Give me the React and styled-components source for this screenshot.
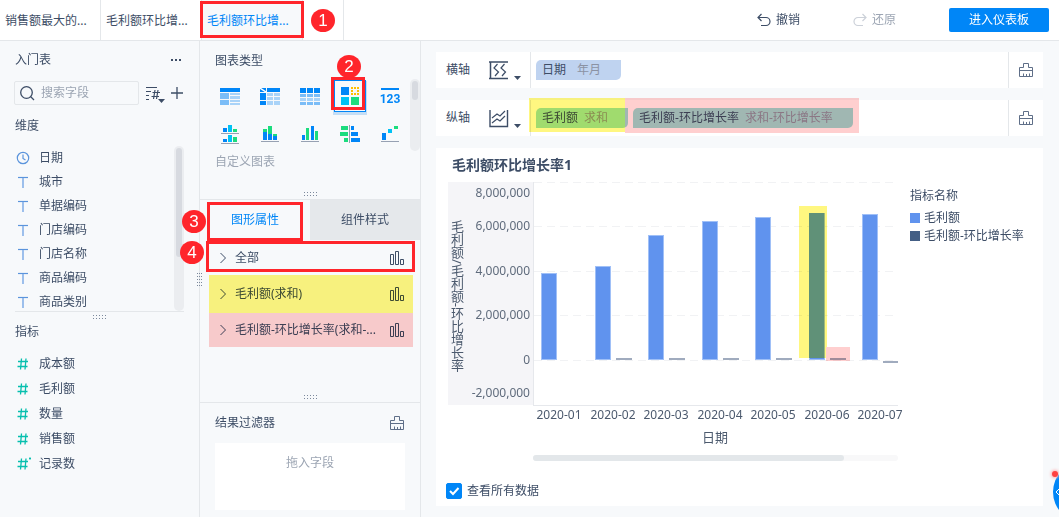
import React from 'react';
import styled, { createGlobalStyle, css } from 'styled-components';

const colors = {
  text: '#3d4d66',
  muted: '#9ca5b3',
  blue: '#0086f7',
  panel: '#f7f9fb',
  line: '#e4e7ea',
  red: '#ff252b',
  yellow: '#fff780',
  pink: '#ffcfcf',
  teal: '#06bfae',
};

const GlobalStyle = createGlobalStyle`
  * {
    box-sizing: border-box;
  }
  body {
    margin: 0;
    background: ${colors.panel};
    color: ${colors.text};
    font: 12px/18px 'Noto Sans', 'Noto Sans CJK SC', sans-serif;
  }
  button, input {
    font: inherit;
    color: inherit;
  }
  button {
    border: 0;
    padding: 0;
    background: none;
    cursor: pointer;
  }
  ul {
    margin: 0;
    padding: 0;
    list-style: none;
  }
  h2, h3 {
    margin: 0;
    font-size: 12px;
    font-weight: 400;
  }
  svg {
    display: block;
    flex: none;
  }
`;

const Page = styled.div`
  position: relative;
  display: flex;
  flex-direction: column;
  min-height: 100vh;
  overflow: hidden;
`;
const Header = styled.header`
  display: flex;
  align-items: stretch;
  height: 41px;
  background: #fff;
  border-bottom: 1px solid ${colors.line};
`;
const SheetTab = styled.div`
  position: relative;
  display: flex;
  width: 101px;
  border-right: 1px solid ${colors.line};
  background: ${({ $active }) => ($active ? colors.panel : '#fff')};
  color: ${({ $active }) => ($active ? colors.blue : colors.text)};

  button {
    flex: 1;
    padding: 1px 5px 0;
    text-align: left;
  }
`;
const TabEnd = styled.div`
  width: 41px;
  border-right: 1px solid ${colors.line};
`;
const HeaderActions = styled.div`
  display: flex;
  align-items: center;
  margin-left: auto;
  padding-right: 10px;
`;
const TextAction = styled.button`
  display: flex;
  align-items: center;
  gap: 5px;
  margin-right: 53px;

  &:disabled {
    color: ${colors.muted};
  }
`;
const PrimaryButton = styled.button`
  width: 100px;
  height: 24px;
  border-radius: 2px;
  background: ${colors.blue};
  color: #fff;
`;
const Body = styled.div`
  display: flex;
  flex: 1;
`;

/* Callouts drawn over the interface */
const Frame = styled.span`
  position: absolute;
  z-index: 2;
  top: ${({ $top }) => $top}px;
  bottom: ${({ $bottom }) => $bottom}px;
  left: ${({ $left }) => $left}px;
  right: ${({ $right }) => $right}px;
  border: 3px solid ${colors.red};
  pointer-events: none;
`;
const Step = styled.span`
  position: absolute;
  z-index: 3;
  top: ${({ $top }) => $top}px;
  left: ${({ $left }) => $left}px;
  width: 24px;
  height: 23px;
  border-radius: 50%;
  background: ${colors.red};
  color: #fff;
  font: 17px/23px 'Liberation Sans', Arial, sans-serif;
  text-align: center;
`;
const Marker = styled.span`
  position: absolute;
  z-index: 1;
  top: ${({ $top }) => $top}px;
  bottom: ${({ $bottom }) => $bottom}px;
  left: ${({ $left }) => $left}px;
  right: ${({ $right }) => $right}px;
  background: ${({ $color }) => $color};
  mix-blend-mode: multiply;
  pointer-events: none;
`;

/* Field list */
const Fields = styled.aside`
  position: relative;
  flex: none;
  width: 200px;
  padding: 0 15px;
  border-right: 1px solid ${colors.line};
`;
const PanelTitle = styled.h2`
  display: flex;
  align-items: center;
  justify-content: space-between;
  height: 38px;
  padding-right: 2px;
`;
const Tools = styled.div`
  display: flex;
  align-items: center;
  gap: 6px;
  margin: 2px 0 0 -1px;
`;
const SearchBox = styled.label`
  display: flex;
  align-items: center;
  gap: 6px;
  width: 125px;
  height: 24px;
  padding: 0 4px;
  border: 1px solid ${colors.line};
  border-radius: 2px;

  input {
    flex: 1;
    min-width: 0;
    padding: 0;
    border: 0;
    outline: 0;
    background: none;
  }
  input::placeholder {
    color: ${colors.muted};
  }
`;
const GroupTitle = styled.h3`
  line-height: ${({ $height }) => $height}px;
`;
const DimensionArea = styled.div`
  display: flex;
  justify-content: space-between;
  height: 166px;
  overflow: hidden;
  border-bottom: 1px solid ${colors.line};
`;
const FieldRow = styled.li`
  display: flex;
  align-items: center;
  gap: 8px;
  height: ${({ $height }) => $height}px;

  svg {
    width: 16px;
  }
`;
const MeasureList = styled.ul`
  margin-top: 9px;
`;
const ScrollTrack = styled.div`
  flex: none;
  width: 10px;
  padding: 2px;
  border-radius: 5px;
  background: #ebedf0;

  &::before {
    content: '';
    display: block;
    height: ${({ $thumb }) => $thumb}px;
    border-radius: 3px;
    background: #d7dae0;
  }
`;
const HandleRow = styled.div`
  display: flex;
  align-items: center;
  justify-content: center;
  height: 10px;
`;
const SideHandle = styled.div`
  position: absolute;
  top: 232px;
  right: -3px;
`;

/* Chart settings */
const Settings = styled.section`
  flex: none;
  width: 221px;
  border-right: 1px solid ${colors.line};
`;
const SettingsBlock = styled.div`
  display: flex;
  flex-direction: column;
  min-height: ${({ $height }) => $height}px;
  border-bottom: 1px solid ${colors.line};

  > ${HandleRow} {
    margin-top: auto;
  }
`;
const BlockTitle = styled(PanelTitle)`
  padding: 2px 15px 0;
`;
const TypePicker = styled.div`
  display: flex;
  justify-content: space-between;
  padding-left: 10px;
`;
const TypeGrid = styled.div`
  display: grid;
  grid-template-columns: repeat(5, 40px);
  grid-auto-rows: 34px;
  row-gap: 4px;
`;
const TypeCell = styled.div`
  position: relative;
  display: flex;
  align-items: center;
  justify-content: center;
`;
const TypeButton = styled.button`
  display: flex;
  align-items: center;
  justify-content: center;
  width: 32px;
  height: 32px;
  ${({ $active }) =>
    $active &&
    css`
      border: 1px solid ${colors.blue};
      box-shadow: 0 2px 0 1px #c5def5;
    `}
`;
const CustomTitle = styled.h3`
  padding-left: 15px;
  color: ${colors.muted};
  line-height: 22px;
`;
const PropertyTabs = styled.div`
  position: relative;
  display: flex;
  height: 40px;
`;
const PropertyTab = styled.button`
  flex: 1;
  background: ${({ $active }) => ($active ? 'none' : '#e5e8eb')};
  color: ${({ $active }) => ($active ? colors.blue : colors.text)};
`;
const PropertyRow = styled.li`
  position: relative;

  button {
    display: flex;
    align-items: center;
    gap: 9px;
    width: 100%;
    height: 36px;
    padding: 0 16px 0 20px;
  }
  svg:last-child {
    margin-left: auto;
  }
`;
const FilterTitle = styled(PanelTitle)`
  height: 40px;
  padding: 0 16px 0 15px;
`;
const DropZone = styled.div`
  height: 67px;
  margin: 0 15px 7px;
  padding-top: 11px;
  background: #fff;
  color: ${colors.muted};
  text-align: center;
`;

/* Shelves and chart */
const Main = styled.main`
  display: flex;
  flex: 1;
  flex-direction: column;
  gap: 12px;
  min-width: 0;
  padding: 11px 16px 11px 15px;
`;
const Shelf = styled.div`
  position: relative;
  display: flex;
  height: 36px;
  background: #fff;
`;
const ShelfLabel = styled.div`
  display: flex;
  align-items: center;
  gap: 19px;
  width: 95px;
  padding-left: 10px;
  border-right: 1px solid ${colors.line};
`;
const Chips = styled.div`
  display: flex;
  flex: 1;
  align-items: center;
  gap: 5px;
  padding-left: 5px;
`;
const ChipBox = styled.div`
  position: relative;
`;
const Chip = styled.button`
  display: flex;
  align-items: center;
  gap: ${({ $gap }) => $gap}px;
  height: 20px;
  padding: 0 20px 0 6px;
  border-radius: 5px 0 5px 0;
  background: ${({ $color }) => $color};
  white-space: nowrap;

  small {
    color: #8b92a3;
    font-size: 12px;
  }
`;
const ClearButton = styled.button`
  display: flex;
  align-items: center;
  justify-content: center;
  width: 35px;
  border-left: 1px solid ${colors.line};
`;
const ChartCard = styled.section`
  flex: 1;
  background: #fff;
`;
const ChartTitle = styled.h2`
  padding-left: 16px;
  font-size: 14px;
  font-weight: 700;
  line-height: 34px;
`;
const ChartBody = styled.div`
  display: flex;
  padding-left: 12px;
`;
const Legend = styled.div`
  padding-top: 5px;
  margin-left: 6px;
`;
const LegendItem = styled.li`
  display: flex;
  align-items: center;
  gap: 4px;

  &::before {
    content: '';
    width: 10px;
    height: 10px;
    background: ${({ $color }) => $color};
  }
`;
const LegendTitle = styled.h3`
  margin-bottom: 4px;
  line-height: 18px;
`;
const ShowAll = styled.label`
  display: flex;
  align-items: center;
  gap: 5px;
  height: 30px;
  padding-left: 10px;

  input {
    width: 16px;
    height: 16px;
    margin: 0;
    appearance: none;
    border-radius: 2px;
    border: 1px solid ${colors.blue};
  }
  input:checked {
    background: ${colors.blue}
      url("data:image/svg+xml,%3Csvg xmlns='http://www.w3.org/2000/svg' viewBox='0 0 14 14'%3E%3Cpath d='M3 7l3 3 5.500-6' fill='none' stroke='white' stroke-width='2'/%3E%3C/svg%3E");
  }
`;
const HelpBubble = styled.button`
  position: absolute;
  right: -54px;
  bottom: -5px;
  width: 60px;
  height: 60px;
  border-radius: 50%;
  background: ${colors.blue};

  &::before {
    content: '';
    position: absolute;
    top: 9px;
    left: -1px;
    width: 6px;
    height: 6px;
    border-radius: 50%;
    background: #ff4040;
    box-shadow: 0 0 3px 1px #ffb0b0;
  }
  svg {
    position: absolute;
    top: 26px;
    left: 2px;
  }
`;

const R = ({ c, d }) => {
  const [x, y, width, height] = d;
  return <rect x={x} y={y} width={width} height={height} fill={c} />;
};

const B = '#0086f7';
const M = '#7bbdf7';
const L = '#a9d3f8';
const C = '#00c2f5';
const G = '#1bdc7e';
const A = '#97a1b3';

const typeIcons = [
  {
    name: '分组表',
    box: '0 -1 20 18',
    rects: [
      [B, 0, 0, 20, 4], [M, 0, 5, 9, 6], [M, 0, 12, 9, 5],
      [L, 10, 5, 10, 2], [L, 10, 8, 10, 3], [L, 10, 12, 10, 2], [L, 10, 15, 10, 2],
    ],
  },
  {
    name: '交叉表',
    box: '0 -1 20 18',
    rects: [
      [B, 0, 0, 6, 4], [B, 7, 0, 13, 4], [B, 0, 5, 6, 7], [B, 0, 13, 6, 4],
      [L, 7, 5, 6, 3], [L, 14, 5, 6, 3], [L, 7, 9, 6, 3], [L, 14, 9, 6, 3], [L, 7, 13, 6, 4], [L, 14, 13, 6, 4],
    ],
    extra: <path d="M0 0l6 4" stroke="#fff" strokeWidth="1.5" />,
  },
  {
    name: '明细表',
    box: '0 -1 20 18',
    rects: [0, 7, 14].flatMap(x => [[B, x, 0, 6, 5], [M, x, 6, 6, 3], [L, x, 10, 6, 3], [M, x, 14, 6, 3]]),
  },
  {
    name: '自定义',
    box: '0 0 18 18',
    rects: [[B, 0, 0, 8, 8], [C, 0, 10, 8, 8], [G, 10, 10, 8, 8]],
    extra: <rect x="11" y="1" width="6" height="6" fill="none" stroke="#ffbf00" strokeWidth="2" strokeDasharray="2 1" strokeDashoffset="1" />,
    active: true,
  },
  {
    name: '指标卡',
    box: '-3 -1 24 18',
    rects: [[B, 0, 0, 18, 2]],
    extra: (
      <text x="9" y="15" fill={B} fontSize="12" fontWeight="700" textAnchor="middle" fontFamily="Roboto, sans-serif">
        123
      </text>
    ),
  },
  {
    name: '分区柱形图',
    box: '0 0 20 20',
    rects: [
      [B, 3, 4, 4, 4], [C, 8, 1, 4, 7], [G, 13, 5, 4, 3], [A, 1, 9, 18, 1],
      [B, 3, 15, 4, 3], [C, 8, 11, 4, 7], [G, 13, 13, 4, 5], [A, 1, 19, 18, 1],
    ],
  },
  {
    name: '堆积柱形图',
    box: '0 0 20 20',
    rects: [
      [G, 3, 5, 4, 3], [B, 3, 8, 4, 8], [G, 8, 2, 4, 8], [B, 8, 10, 4, 6],
      [G, 13, 10, 4, 2], [B, 13, 12, 4, 4], [A, 1, 17, 18, 1],
    ],
  },
  {
    name: '多系列柱形图',
    box: '0 0 20 20',
    rects: [[B, 2, 11, 3, 5], [G, 6, 4, 3, 12], [B, 11, 2, 3, 14], [G, 15, 7, 3, 9], [A, 1, 17, 18, 1]],
  },
  {
    name: '对比柱状图',
    box: '0 0 20 20',
    rects: [
      [A, 9, 1, 1, 18], [G, 1, 2, 7, 4], [G, 0, 8, 8, 4], [G, 4, 14, 4, 4],
      [B, 11, 2, 3, 4], [B, 11, 8, 7, 4], [B, 11, 14, 9, 4],
    ],
  },
  {
    name: '瀑布图',
    box: '0 0 20 20',
    rects: [[B, 2, 9, 4, 7], [C, 8, 5, 4, 4], [G, 14, 2, 4, 3], [A, 1, 17, 18, 1]],
  },
];

const TypeIcon = ({ icon }) => {
  const [, , width, height] = icon.box.split(' ');
  return (
    <svg width={width} height={height} viewBox={icon.box}>
      {icon.rects.map(([c, ...d], i) => (
        <R key={i} c={c} d={d} />
      ))}
      {icon.extra}
    </svg>
  );
};

const IconDots = () => (
  <svg width="13" height="4" fill="#7c899c">
    {[0, 3, 6, 9, 12].flatMap(x => [0, 3].map(y => <rect key={`${x}-${y}`} x={x} y={y} width="1" height="1" />))}
  </svg>
);
const IconDotsVertical = () => (
  <svg width="5" height="13" fill="#7c899c">
    {[0, 2, 4].flatMap(x => [0, 3, 6, 9, 12].map(y => <rect key={`${x}-${y}`} x={x} y={y} width="1" height="1" />))}
  </svg>
);
const IconClock = () => (
  <svg height="14" viewBox="-1 0 16 14" fill="none" stroke="#5b94dc" strokeWidth="1.2">
    <circle cx="7" cy="7" r="5.7" />
    <path d="M7 3.5v4l2.500 1.500" />
  </svg>
);
const IconText = () => (
  <svg height="14" viewBox="-1 0 16 14" fill="none">
    <path d="M2 2.500h10" stroke="#5b94dc" strokeWidth="1.2" />
    <path d="M7 3v10" stroke="#92b8ea" strokeWidth="1.8" />
  </svg>
);
const IconHash = ({ star }) => (
  <svg height="14" viewBox="-1 0 16 14" fill="none" stroke={colors.teal} strokeWidth="1.3">
    <path d="M2 4.500h10M1.500 9.500h10M5.500 1.500l-1 11M10 1.500l-1 11" />
    {star && <path d="M13 1.500h2M14 .5v2" />}
  </svg>
);
const IconSearch = () => (
  <svg width="16" height="16" fill="none" stroke={colors.text} strokeWidth="1.3">
    <circle cx="7.5" cy="7.5" r="5.8" />
    <path d="M11.500 11.500l3.500 3.500" />
  </svg>
);
const IconSort = () => (
  <svg width="20" height="20" fill="none" stroke={colors.text}>
    <path d="M1 4.500h11M1 8.500h5M1 12.500h3M1 16.500h3" strokeWidth="1.2" />
    <path d="M7.500 9.500h7.500M6.500 13.500h7.500M10 7l-1.500 9M13 7l-1.500 9" strokeWidth="1.2" />
    <path d="M13 16h7l-3.500 4z" fill={colors.text} stroke="none" />
  </svg>
);
const IconPlus = () => (
  <svg width="12" height="12" stroke={colors.text}>
    <path d="M0 6h12M6 0v12" strokeWidth="1.3" />
  </svg>
);
const IconMore = () => (
  <svg width="12" height="4" fill={colors.text}>
    <path d="M1 1h2v2H1zM5 1h2v2H5zM9 1h2v2H9z" />
  </svg>
);
const IconChevron = () => (
  <svg width="6" height="12" fill="none" stroke={colors.text}>
    <path d="M.5 1l5 5-5 5" />
  </svg>
);
const IconBars = () => (
  <svg width="14" height="14" fill="none" stroke={colors.text}>
    <path d="M.5 3.500h3v10h-3zM5.500 .5h3v13h-3zM10.500 8.500h3v5h-3z" />
  </svg>
);
const IconBrush = () => (
  <svg width="14" height="14" fill="none" stroke="#5f6f88">
    <path d="M4.500 4.500v-4h5v4h4v9h-13v-9h4M.5 7.500h13M4.500 13.500v-3M7.500 13.500v-2.500M10.500 13.500v-3" />
  </svg>
);
const IconBack = () => (
  <svg width="14" height="14" fill="none" stroke="currentColor" strokeWidth="1.2">
    <path d="M4.500 1L1 4.500 4.500 8M1 4.500h8a4 4 0 0 1 0 8H4" />
  </svg>
);
const IconForward = () => (
  <svg width="14" height="14" fill="none" stroke="#ccd1d9" strokeWidth="1.2">
    <path d="M9.500 1L13 4.500 9.500 8M13 4.500H5a4 4 0 0 0 0 8h5" />
  </svg>
);
const IconXAxis = () => (
  <svg width="32" height="20" fill="none" stroke={colors.text} strokeWidth="1.2">
    <path d="M0 2h19M1.500 2v17M0 18.500h19" strokeWidth="1.5" />
    <path d="M8.500 4L5 8l4.500 4L6 16M15.500 4L12 8l4.500 4-3.500 4" />
    <path d="M25 16h7l-3.500 4z" fill={colors.text} stroke="none" />
  </svg>
);
const IconYAxis = () => (
  <svg width="32" height="20" fill="none" stroke={colors.text} strokeWidth="1.2">
    <path d="M1 2v16.500h17.500V2" strokeWidth="1.4" />
    <path d="M3 10l5-4 3 2 5-5M3 15l5-4 3 2 5-5" />
    <path d="M25 16h7l-3.500 4z" fill={colors.text} stroke="none" />
  </svg>
);

const sheets = ['销售额最大的...', '毛利额环比增...', '毛利额环比增...'];
const dimensions = ['日期', '城市', '单据编码', '门店编码', '门店名称', '商品编码', '商品类别'];
const measures = ['成本额', '毛利额', '数量', '销售额', '记录数'];
const months = [
  { label: '2020-01', profit: 3.9 },
  { label: '2020-02', profit: 4.22, rate: 1 },
  { label: '2020-03', profit: 5.6, rate: 1 },
  { label: '2020-04', profit: 6.23, rate: 1 },
  { label: '2020-05', profit: 6.41, rate: 1 },
  { label: '2020-06', profit: 6.6, rate: 1 },
  { label: '2020-07', profit: 6.54, rate: -1 },
];
const ticks = [
  ['8,000,000', 11],
  ['6,000,000', 44],
  ['4,000,000', 89],
  ['2,000,000', 133],
  ['0', 178],
  ['-2,000,000', 211],
];

const ZERO = 178;
const STEP = 53.5;
const MILLION = 22.25;

const Chart = () => (
  <svg width="456" height="294" fill="#4c5a6e" fontSize="12">
    <rect width="85" height="223" fill="#f5f5f8" />
    {[0.5, 44.5, 89.5, 133.5, 178.5].map(y => (
      <path key={y} d={`M86 ${y}h364`} stroke="#f1f2f4" strokeDasharray="8 5" />
    ))}
    <path d="M85.500 0v223M85 223.500h365" stroke="#e6e8ec" fill="none" />
    <text x="9" y="114" fontSize="13" textAnchor="middle" style={{ writingMode: 'vertical-rl' }}>
      毛利额/毛利额-环比增长率
    </text>
    {ticks.map(([label, y]) => (
      <text key={label} x="82" y={y + 4} textAnchor="end" fill="#5f6b7c">
        {label}
      </text>
    ))}
    {months.map(({ label, profit, rate }, i) => {
      const x = Math.round(93 + i * STEP);
      const h = Math.round(profit * MILLION);
      return (
        <g key={label}>
          <rect x={x + 0.5} y={ZERO - h + 0.5} width="15" height={h - 1} fill="#6093ee" stroke="#a0c0f7" />
          {rate && (
            <rect x={x + 21} y={rate > 0 ? ZERO - 2 : ZERO + 1} width={i === 6 ? 15 : 16} height="2" fill="#a0abbe" />
          )}
          <text x={x + 18} y="237" textAnchor="middle">
            {label}
          </text>
        </g>
      );
    })}
    <g style={{ mixBlendMode: 'multiply' }}>
      <rect x="351" y="24" width="28" height="152" fill={colors.yellow} />
      <rect x="378" y="165" width="24" height="14" fill={colors.pink} />
    </g>
    <rect x="361" y="31" width="15" height="145" fill="#609178" />
    <text x="267" y="260" fontSize="13" textAnchor="middle">
      日期
    </text>
    <rect x="85" y="273" width="365" height="6" rx="3" fill="#f8f8f9" />
    <rect x="85" y="273" width="311" height="6" rx="3" fill="#e3e7ea" />
  </svg>
);

const App = () => (
  <Page>
    <GlobalStyle />
    <Header>
      {sheets.map((name, i) => (
        <SheetTab key={i} $active={i === 2}>
          <button type="button">{name}</button>
          {i === 2 && (
            <>
              <Frame $top={1} $bottom={2} $left={-2} $right={-2} />
              <Step $top={9} $left={109}>1</Step>
            </>
          )}
        </SheetTab>
      ))}
      <TabEnd />
      <HeaderActions>
        <TextAction type="button">
          <IconBack />
          撤销
        </TextAction>
        <TextAction type="button" disabled>
          <IconForward />
          还原
        </TextAction>
        <PrimaryButton type="button">进入仪表板</PrimaryButton>
      </HeaderActions>
    </Header>
    <Body>
      <Fields>
        <PanelTitle>
          入门表
          <button type="button" aria-label="更多">
            <IconMore />
          </button>
        </PanelTitle>
        <Tools>
          <SearchBox>
            <IconSearch />
            <input type="text" placeholder="搜索字段" aria-label="搜索字段" />
          </SearchBox>
          <button type="button" aria-label="排序">
            <IconSort />
          </button>
          <button type="button" aria-label="添加">
            <IconPlus />
          </button>
        </Tools>
        <GroupTitle $height={41}>维度</GroupTitle>
        <DimensionArea>
          <ul>
            {dimensions.map((name, i) => (
              <FieldRow key={name} $height={24}>
                {i === 0 ? <IconClock /> : <IconText />}
                {name}
              </FieldRow>
            ))}
          </ul>
          <ScrollTrack $thumb={109} />
        </DimensionArea>
        <HandleRow>
          <IconDots />
        </HandleRow>
        <GroupTitle $height={20}>指标</GroupTitle>
        <MeasureList>
          {measures.map((name, i) => (
            <FieldRow key={name} $height={25}>
              <IconHash star={i === 4} />
              {name}
            </FieldRow>
          ))}
        </MeasureList>
        <SideHandle>
          <IconDotsVertical />
        </SideHandle>
      </Fields>

      <Settings>
        <SettingsBlock $height={159}>
          <BlockTitle>图表类型</BlockTitle>
          <TypePicker>
            <TypeGrid>
              {typeIcons.map(icon => (
                <TypeCell key={icon.name}>
                  <TypeButton type="button" aria-label={icon.name} $active={icon.active}>
                    <TypeIcon icon={icon} />
                  </TypeButton>
                  {icon.active && (
                    <>
                      <Frame $top={-2} $bottom={3} $left={1} $right={5} />
                      <Step $top={-24} $left={7}>2</Step>
                    </>
                  )}
                </TypeCell>
              ))}
            </TypeGrid>
            <ScrollTrack $thumb={19} />
          </TypePicker>
          <CustomTitle>自定义图表</CustomTitle>
          <HandleRow>
            <IconDots />
          </HandleRow>
        </SettingsBlock>
        <SettingsBlock $height={203}>
          <PropertyTabs>
            <PropertyTab type="button" $active>
              图形属性
            </PropertyTab>
            <PropertyTab type="button">组件样式</PropertyTab>
            <Frame $top={2} $bottom={-1} $left={7} $right={117} />
            <Step $top={10} $left={-18}>3</Step>
          </PropertyTabs>
          <ul>
            <PropertyRow>
              <button type="button">
                <IconChevron />
                全部
                <IconBars />
              </button>
              <Frame $top={1} $bottom={4} $left={6} $right={5} />
              <Step $top={1} $left={-20}>4</Step>
            </PropertyRow>
            <PropertyRow>
              <button type="button">
                <IconChevron />
                毛利额(求和)
                <IconBars />
              </button>
              <Marker $color={colors.yellow} $top={-1} $bottom={-1} $left={9} $right={7} />
            </PropertyRow>
            <PropertyRow>
              <button type="button">
                <IconChevron />
                毛利额-环比增长率(求和-...
                <IconBars />
              </button>
              <Marker $color={colors.pink} $top={1} $bottom={1} $left={9} $right={7} />
            </PropertyRow>
          </ul>
          <HandleRow>
            <IconDots />
          </HandleRow>
        </SettingsBlock>
        <FilterTitle>
          结果过滤器
          <button type="button" aria-label="清空过滤器">
            <IconBrush />
          </button>
        </FilterTitle>
        <DropZone>拖入字段</DropZone>
      </Settings>

      <Main>
        <Shelf>
          <ShelfLabel>
            横轴
            <button type="button" aria-label="横轴设置">
              <IconXAxis />
            </button>
          </ShelfLabel>
          <Chips>
            <Chip type="button" $color="#bfd3f0" $gap={11}>
              日期 <small>年月</small>
            </Chip>
          </Chips>
          <ClearButton type="button" aria-label="清空横轴">
            <IconBrush />
          </ClearButton>
        </Shelf>
        <Shelf>
          <ShelfLabel>
            纵轴
            <button type="button" aria-label="纵轴设置">
              <IconYAxis />
            </button>
          </ShelfLabel>
          <Chips>
            <ChipBox>
              <Chip type="button" $color="#a0e2dc" $gap={6}>
                毛利额 <small>求和</small>
              </Chip>
              <Marker $color={colors.yellow} $top={-10} $bottom={-4} $left={-7} $right={3} />
            </ChipBox>
            <ChipBox>
              <Chip type="button" $color="#a0e2dc" $gap={6}>
                毛利额-环比增长率 <small>求和-环比增长率</small>
              </Chip>
              <Marker $color={colors.pink} $top={-10} $bottom={-5} $left={-8} $right={-6} />
            </ChipBox>
          </Chips>
          <ClearButton type="button" aria-label="清空纵轴">
            <IconBrush />
          </ClearButton>
        </Shelf>
        <ChartCard>
          <ChartTitle>毛利额环比增长率1</ChartTitle>
          <ChartBody>
            <Chart />
            <Legend>
              <LegendTitle>指标名称</LegendTitle>
              <ul>
                <LegendItem $color="#6093ee">毛利额</LegendItem>
                <LegendItem $color="#445f85">毛利额-环比增长率</LegendItem>
              </ul>
            </Legend>
          </ChartBody>
          <ShowAll>
            <input type="checkbox" defaultChecked />
            查看所有数据
          </ShowAll>
        </ChartCard>
      </Main>
    </Body>
    <HelpBubble type="button" aria-label="展开">
      <svg width="5" height="8" fill="none" stroke="#fff">
        <path d="M4 1L1 4l3 3" />
      </svg>
    </HelpBubble>
  </Page>
);

export default App;
